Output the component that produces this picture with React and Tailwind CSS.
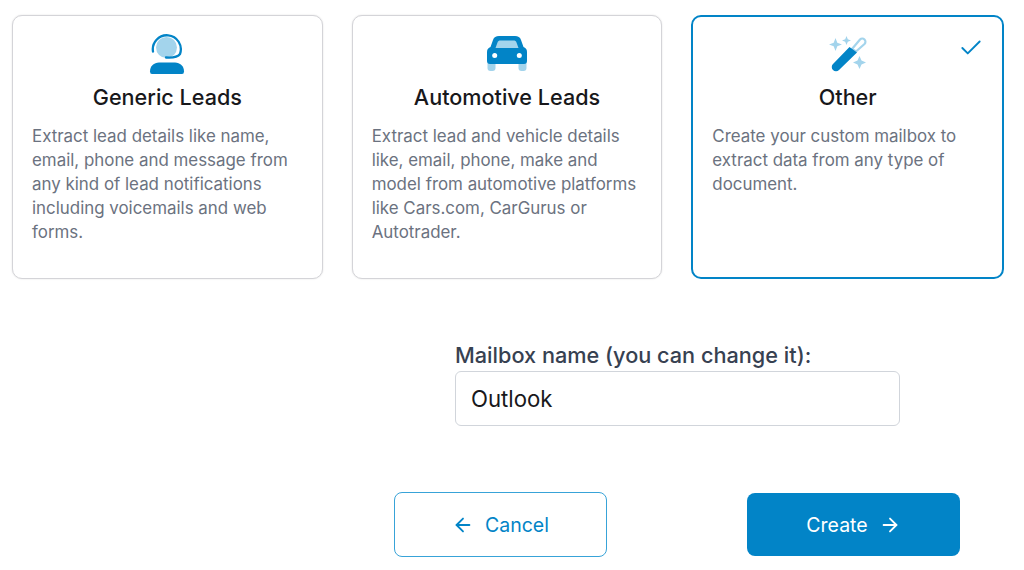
import React from "react";
import { ArrowLeft, ArrowRight, Check } from "lucide-react";

const Headset = () => (
  <svg width="36" height="40" viewBox="0 0 36 40">
    <circle cx="17.500" cy="13.500" r="10.500" fill="#a3d4ec" />
    <path d="M4 17.500 A14 14 0 1 1 31 20 C28.500 23.500 24 24 17 23.500" fill="none" stroke="#0284c7" strokeWidth="2.300" strokeLinecap="round" />
    <path d="M1 37.500 C1 32 5 28.500 10 28.500 H26 C31 28.500 35 32 35 37.500 Q35 40 33 40 H3 Q1 40 1 37.500 Z" fill="#0284c7" />
  </svg>
);

const Car = () => (
  <svg width="40" height="36" viewBox="0 0 40 36">
    <rect x="0.500" y="25" width="8" height="10" rx="3" fill="#a3d4ec" />
    <rect x="31.500" y="25" width="8" height="10" rx="3" fill="#a3d4ec" />
    <path d="M0 16 C0 13 1.500 12 3.500 11 L6 4 C7 1 9 0 12 0 H28 C31 0 33 1 34 4 L36.500 11 C38.500 12 40 13 40 16 V25 C40 27 39 28 37 28 H3 C1 28 0 27 0 25 Z" fill="#0284c7" />
    <path d="M8.500 12 L10.500 6.500 C11 5 12 4.500 13.500 4.500 H26.500 C28 4.500 29 5 29.500 6.500 L31.500 12 Z" fill="#a3d4ec" />
    <circle cx="7.700" cy="19.500" r="2.500" fill="#fff" />
    <circle cx="32.300" cy="19.500" r="2.500" fill="#fff" />
  </svg>
);

const Wand = () => (
  <svg width="40" height="36" viewBox="0 0 40 36">
    <path d="M7.500 2 L9.300 6.700 L14 8.500 L9.300 10.300 L7.500 15 L5.700 10.300 L1 8.500 L5.700 6.700 Z" fill="#a3d4ec" />
    <path d="M18.500 0 L19.800 3.200 L23 4.500 L19.800 5.800 L18.500 9 L17.200 5.800 L14 4.500 L17.200 3.200 Z" fill="#a3d4ec" />
    <path d="M31.500 20 L33.500 24.500 L38 26.500 L33.500 28.500 L31.500 33 L29.500 28.500 L25 26.500 L29.500 24.500 Z" fill="#a3d4ec" />
    <path d="M24 13 L32 3.500 A3 3 0 0 1 36.500 8 L28 15.500 Z" fill="none" stroke="#a3d4ec" strokeWidth="2.200" />
    <path d="M21.500 11 L29 16.500 L11 34 A4 4 0 0 1 5 28 Z" fill="#0284c7" />
  </svg>
);

function Card({ icon, title, text, selected, iconPad }) {
  return (
    <div className={`relative h-[264px] flex-1 rounded-[10px] bg-white ${selected ? "border-2 border-[#0284c7] px-[19px]" : "border border-[#d4d4d8] px-[19px] shadow-[0_0_2px_rgba(0,0,0,0.12)]"}`}>
      {selected && <Check className="absolute right-[18px] top-[18px] text-[#0284c7]" size={26} strokeWidth={1.75} />}
      <div className={`flex h-[58px] items-end justify-center ${selected ? "-mt-px" : ""} ${iconPad ? "pb-[2px]" : ""}`}>{icon}</div>
      <h3 className="mt-[7px] text-center text-[21.6px] leading-[32px] font-medium text-[#18181b]">{title}</h3>
      <p className="mt-[11px] text-[16.9px] leading-[24px] text-[#6b7280]">{text}</p>
    </div>
  );
}

export default function App() {
  return (
    <div className="h-[570px] w-[1024px] overflow-hidden bg-white font-['Inter',sans-serif]">
      <div className="flex gap-[29px] pl-[12px] pr-[20px] pt-[15px]">
        <Card icon={<Headset />} title="Generic Leads" text="Extract lead details like name, email, phone and message from any kind of lead notifications including voicemails and web forms." />
        <Card iconPad icon={<Car />} title="Automotive Leads" text="Extract lead and vehicle details like, email, phone, make and model from automotive platforms like Cars.com, CarGurus or Autotrader." />
        <Card iconPad selected icon={<Wand />} title="Other" text="Create your custom mailbox to extract data from any type of document." />
      </div>
      <div className="ml-[455px] mt-[61px] w-[445px]">
        <label className="block text-[21.7px] leading-[30px] font-medium text-[#374151]">Mailbox name (you can change it):</label>
        <div className="mt-[1px] flex h-[55px] items-center rounded-[6px] border border-[#d1d5db] px-[15px] text-[22.2px] text-[#18181b]">Outlook</div>
      </div>
      <div className="mt-[66px] flex items-center pl-[394px]">
        <button className="flex h-[65px] w-[213px] items-center justify-center gap-[11px] rounded-[8px] border border-[#38a3d8] text-[19.5px] font-normal text-[#0284c7]">
          <ArrowLeft size={22} /><span className="pt-[3px]">Cancel</span>
        </button>
        <button className="ml-[140px] flex h-[63px] w-[213px] items-center justify-center gap-[11px] rounded-[8px] bg-[#0284c7] text-[19.5px] font-normal text-white">
          <span className="pt-[3px]">Create</span><ArrowRight size={22} />
        </button>
      </div>
    </div>
  );
}
